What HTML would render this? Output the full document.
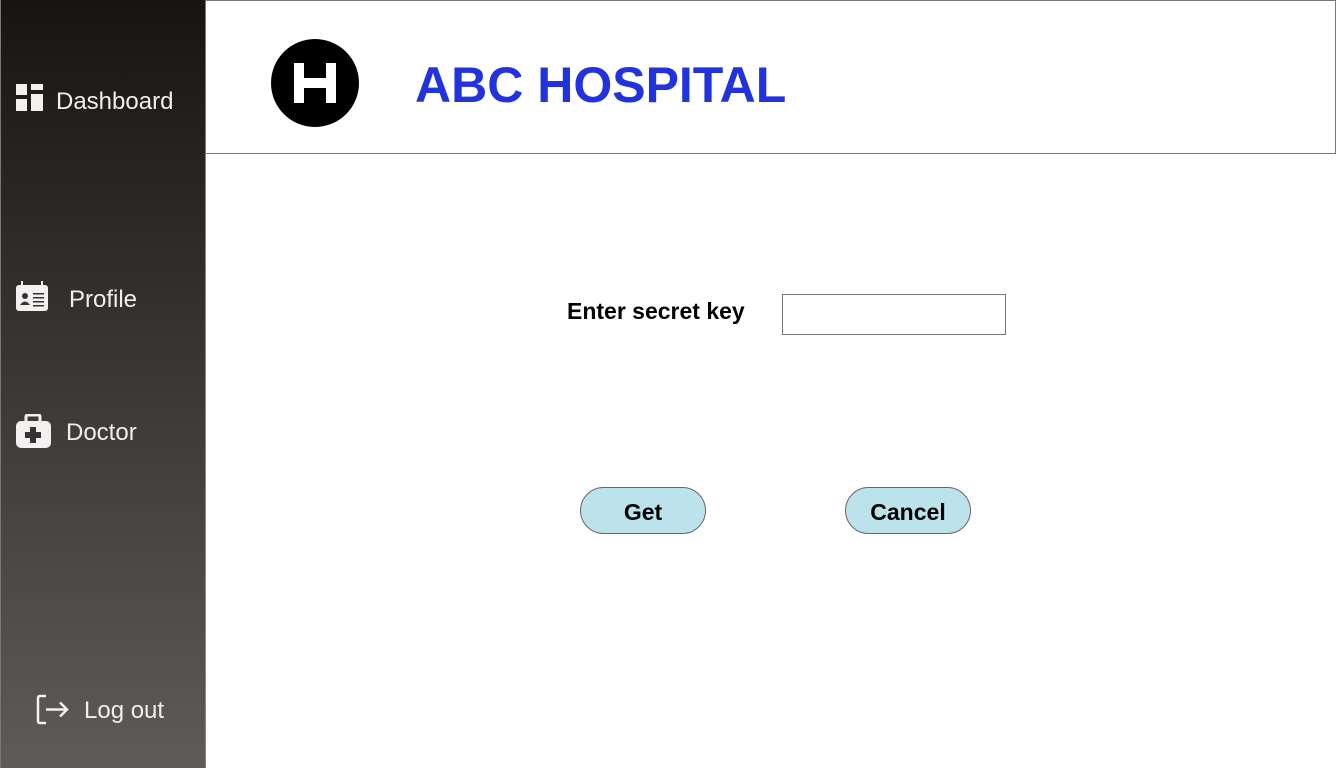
<!DOCTYPE html>
<html><head><style>
body{margin:0;width:1336px;height:768px;position:relative;background:#fff;font-family:"Liberation Sans",sans-serif;overflow:hidden}
#side{position:absolute;left:0;top:0;width:204px;height:768px;background:linear-gradient(#181412,#5f5b59);border-left:1px solid #777;border-right:1px solid #888;box-sizing:border-box;width:206px}
.it{position:absolute;color:#f2eeee;font-size:24px}
#hdr{position:absolute;left:205px;top:0;width:1131px;height:154px;border:1px solid #777;box-sizing:border-box}
.btn{position:absolute;width:126px;height:47px;border:1px solid #666;border-radius:24px;background:#bce2ec;font-weight:bold;font-size:23px;text-align:center;line-height:49px;box-sizing:border-box}
</style></head><body>
<div id="side">
<svg style="position:absolute;left:15px;top:84px" width="27" height="27"><rect x="0" y="0" width="11" height="11" fill="#f4f0f0"/><rect x="0" y="15" width="11" height="12" fill="#f4f0f0"/><rect x="15" y="0" width="12" height="6" fill="#f4f0f0"/><rect x="15" y="10" width="12" height="17" fill="#f4f0f0"/></svg>
<div class="it" style="left:55px;top:88px">Dashboard</div>
<svg style="position:absolute;left:15px;top:281px" width="33" height="30"><rect x="0" y="4" width="32" height="26" rx="3" fill="#f4f0f0"/><rect x="5" y="0" width="2" height="7" fill="#f4f0f0"/><rect x="25" y="0" width="2" height="7" fill="#f4f0f0"/><circle cx="9" cy="15" r="3" fill="#333"/><path d="M4 24 Q9 17 14 24Z" fill="#333"/><rect x="17" y="12" width="11" height="1.5" fill="#333"/><rect x="17" y="16" width="11" height="1.5" fill="#333"/><rect x="17" y="20" width="11" height="1.5" fill="#333"/><rect x="17" y="24" width="11" height="1.5" fill="#333"/></svg>
<div class="it" style="left:68px;top:286px">Profile</div>
<svg style="position:absolute;left:15px;top:414px" width="35" height="34"><path d="M10 8 V3 Q10 1 12 1 H22 Q24 1 24 3 V8" stroke="#f4f0f0" stroke-width="3" fill="none"/><rect x="0" y="7" width="35" height="27" rx="5" fill="#f4f0f0"/><rect x="14" y="13" width="6" height="16" fill="#333"/><rect x="9" y="18" width="16" height="6" fill="#333"/></svg>
<div class="it" style="left:65px;top:419px">Doctor</div>
<svg style="position:absolute;left:35px;top:694px" width="34" height="32" fill="none" stroke="#f4f0f0" stroke-width="2.5"><path d="M10 2 H4 Q2 2 2 4 V27 Q2 29 4 29 H10"/><path d="M10 15.5 H31 M24 8.5 L31 15.5 L24 22.5"/></svg>
<div class="it" style="left:83px;top:697px">Log out</div>
</div>
<div id="hdr">
<svg style="position:absolute;left:65px;top:38px" width="88" height="88"><circle cx="44" cy="44" r="44" fill="#000"/><path d="M28 24 V64 M60 24 V64 M28 44 H60" stroke="#fff" stroke-width="10"/></svg>
<div style="position:absolute;left:209px;top:55px;font-size:50px;font-weight:bold;color:#2233dd">ABC HOSPITAL</div>
</div>
<div style="position:absolute;left:567px;top:298px;font-size:23px;font-weight:bold">Enter secret key</div>
<div style="position:absolute;left:782px;top:294px;width:224px;height:41px;border:1px solid #777;box-sizing:border-box"></div>
<div class="btn" style="left:580px;top:487px">Get</div>
<div class="btn" style="left:845px;top:487px">Cancel</div>
</body></html>
